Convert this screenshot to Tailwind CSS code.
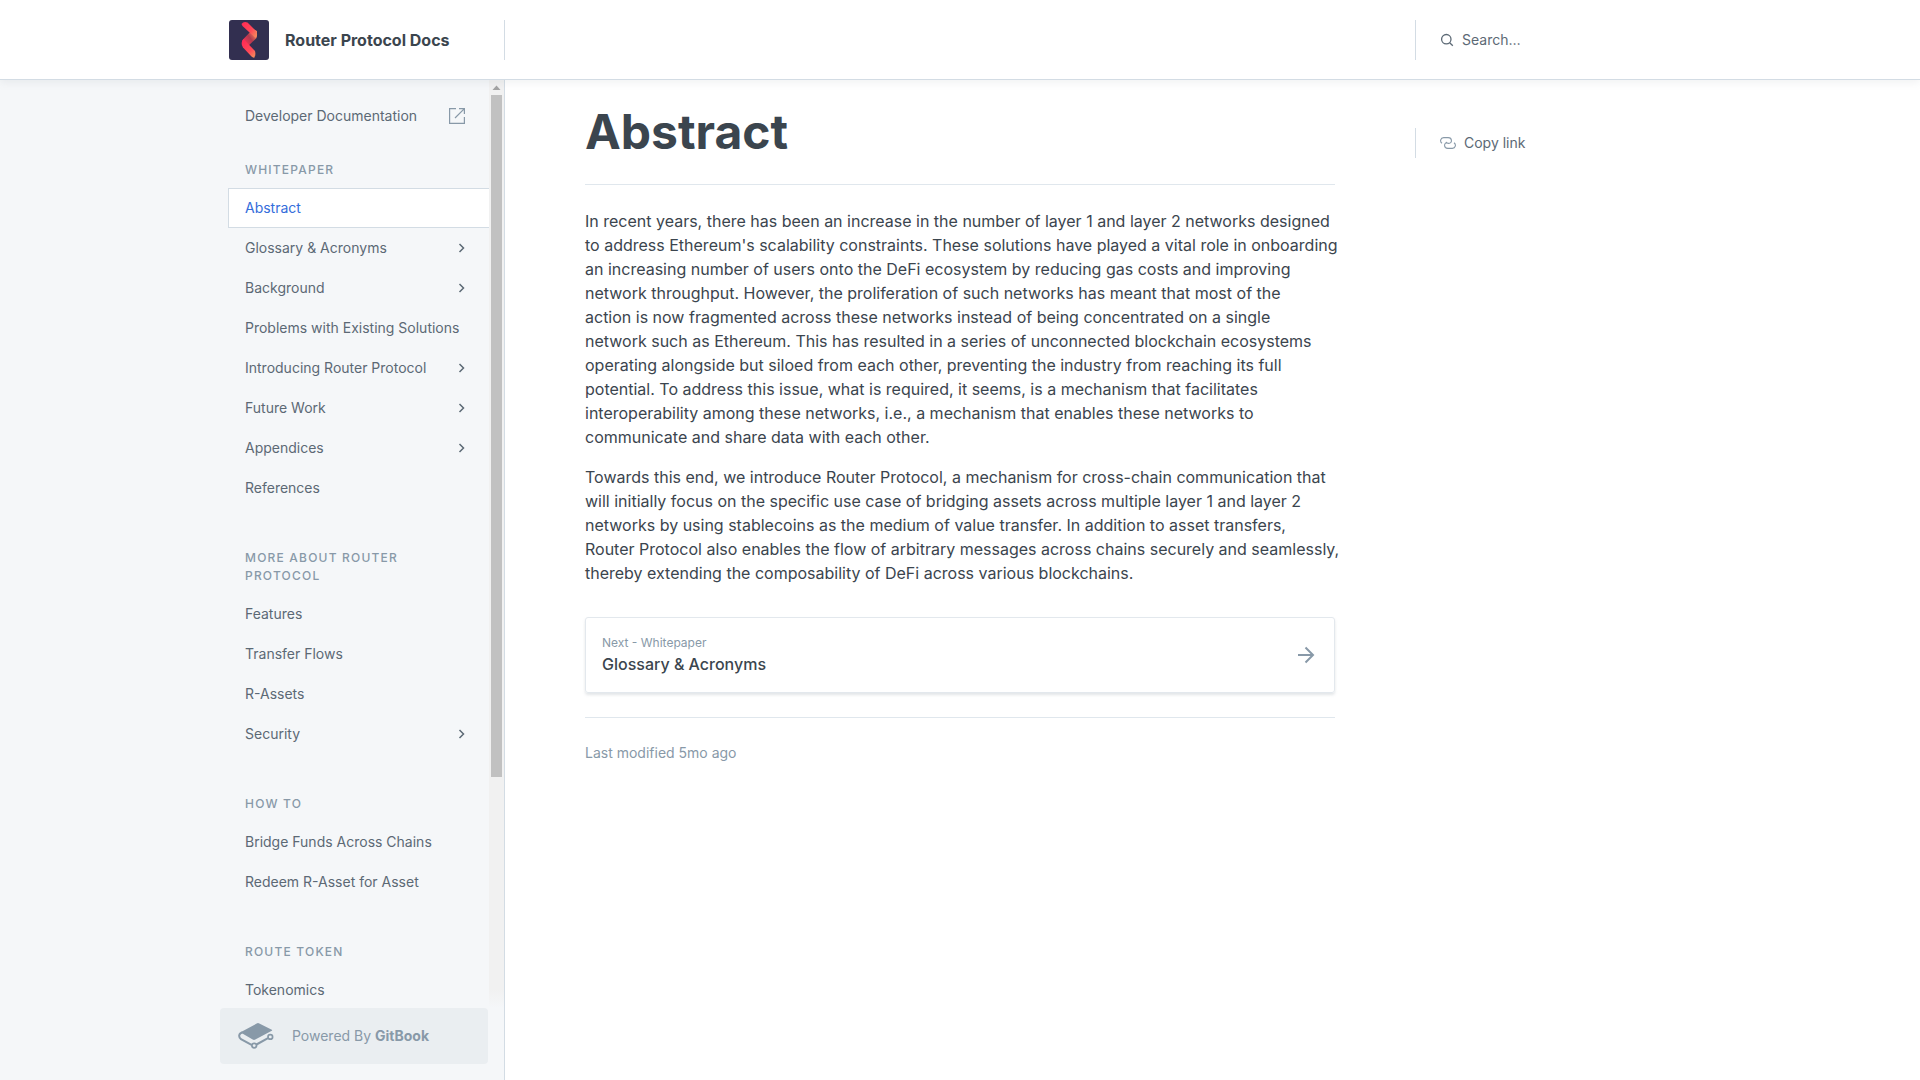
<!DOCTYPE html>
<html lang="en">
<head>
<meta charset="utf-8">
<meta name="viewport" content="width=device-width, initial-scale=1">
<title>Abstract - Router Protocol Docs</title>
<script src="https://cdn.jsdelivr.net/npm/@tailwindcss/browser@4"></script>
</head>
<body class="flex h-screen flex-col overflow-hidden bg-white font-['Inter',sans-serif] text-[#3b454e]">
<svg class="hidden">
  <symbol id="chevron" viewBox="0 0 16 16"><path d="M5.5 4 9.500 8l-4 4" fill="none" stroke="currentColor" stroke-width="1.500"/></symbol>
</svg>

<header class="relative z-10 h-20 shrink-0 border-b border-[#d3dce4] bg-white shadow-[0_3px_8px_0_rgba(116,129,141,0.1)]">
  <div class="mx-auto flex h-full max-w-[1464px] items-center">
    <div class="flex h-10 w-[277px] shrink-0 items-center border-r border-[#d3dce4]">
      <a href="#" class="flex items-center gap-4 pl-px font-bold">
        <svg class="size-10" viewBox="0 0 40 40" aria-hidden="true">
          <defs>
            <linearGradient id="arm-top" gradientUnits="userSpaceOnUse" x1="13" y1="4" x2="28" y2="15"><stop offset="0" stop-color="#ff2d55"/><stop offset=".6" stop-color="#ff4757"/><stop offset="1" stop-color="#f58a5c"/></linearGradient>
            <linearGradient id="arm-mid" gradientUnits="userSpaceOnUse" x1="27" y1="14" x2="14" y2="23"><stop offset="0" stop-color="#f5805c"/><stop offset=".45" stop-color="#b03a4e"/><stop offset="1" stop-color="#ff3355"/></linearGradient>
            <linearGradient id="arm-low" gradientUnits="userSpaceOnUse" x1="14" y1="22" x2="26" y2="36"><stop offset="0" stop-color="#ff2d55"/><stop offset=".6" stop-color="#ff4757"/><stop offset="1" stop-color="#f58a5c"/></linearGradient>
          </defs>
          <rect width="40" height="40" rx="3" fill="#322f50"/>
          <path d="M28 11v5q0 2-2 3.500L18 27l-4-1.500q-2-3.500 0-6L24 9z" fill="url(#arm-mid)"/>
          <path d="M12.500 4q2-3 6-1.500l8 8q3 3.500 0 7.500L13.500 6z" fill="url(#arm-top)"/>
          <path d="M14.500 19 26 31q1 3.500-.5 6.500-1.500.5-3-1L14 27.500Q11 23 14.500 19z" fill="url(#arm-low)"/>
        </svg>
        <span>Router Protocol Docs</span>
      </a>
    </div>
    <div class="ml-[910px] flex h-10 items-center border-l border-[#d3dce4] pl-6">
      <button type="button" class="flex items-center gap-2 text-sm text-[#5c6975]">
        <svg class="size-[14px]" viewBox="0 0 14 14" fill="none" stroke="currentColor" stroke-width="1.300" aria-hidden="true"><circle cx="6.300" cy="6.200" r="4.700"/><path d="m9.700 9.700 3.100 3"/></svg>
        <span>Search…</span>
      </button>
    </div>
  </div>
</header>

<div class="flex min-h-0 flex-1">
  <aside class="flex w-[calc((100%_-_1464px)/2_+_277px)] min-w-[285px] shrink-0 flex-col items-end border-r border-[#d3dce4] bg-[#f5f7f9]">
    <div class="flex min-h-0 w-[276px] flex-1">
      <nav aria-label="Pages" class="min-w-0 flex-1 overflow-hidden pt-4 text-sm text-[#5c6975]">
        <a href="#" class="flex h-10 items-center justify-between pr-6 pl-[17px]">Developer Documentation
          <svg class="size-4" viewBox="0 0 16 16" fill="none" stroke="#8899a8" stroke-width="1.200" aria-hidden="true"><path d="M7 .6H.6v14.800h14.800V9M10 .6h5.400V6M15.400.6 6 10"/></svg>
        </a>
        <h2 class="mt-[25px] mb-[9px] px-[17px] text-xs leading-[18px] font-medium tracking-[1.2px] text-[#8899a8] uppercase">Whitepaper</h2>
        <a href="#" aria-current="page" class="flex h-10 items-center border border-r-0 border-[#d3dce4] bg-white pl-4 text-[#346ddb]">Abstract</a>
        <a href="#" class="flex h-10 items-center justify-between pr-[19px] pl-[17px]">Glossary &amp; Acronyms<svg class="size-4" aria-hidden="true"><use href="#chevron"/></svg></a>
        <a href="#" class="flex h-10 items-center justify-between pr-[19px] pl-[17px]">Background<svg class="size-4" aria-hidden="true"><use href="#chevron"/></svg></a>
        <a href="#" class="flex h-10 items-center pl-[17px]">Problems with Existing Solutions</a>
        <a href="#" class="flex h-10 items-center justify-between pr-[19px] pl-[17px]">Introducing Router Protocol<svg class="size-4" aria-hidden="true"><use href="#chevron"/></svg></a>
        <a href="#" class="flex h-10 items-center justify-between pr-[19px] pl-[17px]">Future Work<svg class="size-4" aria-hidden="true"><use href="#chevron"/></svg></a>
        <a href="#" class="flex h-10 items-center justify-between pr-[19px] pl-[17px]">Appendices<svg class="size-4" aria-hidden="true"><use href="#chevron"/></svg></a>
        <a href="#" class="flex h-10 items-center pl-[17px]">References</a>
        <h2 class="mt-[41px] mb-[9px] px-[17px] text-xs leading-[18px] font-medium tracking-[1.2px] text-[#8899a8] uppercase">More about Router Protocol</h2>
        <a href="#" class="flex h-10 items-center pl-[17px]">Features</a>
        <a href="#" class="flex h-10 items-center pl-[17px]">Transfer Flows</a>
        <a href="#" class="flex h-10 items-center pl-[17px]">R-Assets</a>
        <a href="#" class="flex h-10 items-center justify-between pr-[19px] pl-[17px]">Security<svg class="size-4" aria-hidden="true"><use href="#chevron"/></svg></a>
        <h2 class="mt-[41px] mb-[9px] px-[17px] text-xs leading-[18px] font-medium tracking-[1.2px] text-[#8899a8] uppercase">How to</h2>
        <a href="#" class="flex h-10 items-center pl-[17px]">Bridge Funds Across Chains</a>
        <a href="#" class="flex h-10 items-center pl-[17px]">Redeem R-Asset for Asset</a>
        <h2 class="mt-[41px] mb-[9px] px-[17px] text-xs leading-[18px] font-medium tracking-[1.2px] text-[#8899a8] uppercase">Route Token</h2>
        <a href="#" class="flex h-10 items-center pl-[17px]">Tokenomics</a>
      </nav>
      <div class="flex w-[15px] shrink-0 flex-col items-center bg-linear-to-b from-[#f1f1f1] from-98% to-[#f5f7f9]" aria-hidden="true">
        <svg class="h-[15px] w-[15px] shrink-0" viewBox="0 0 15 15"><path d="M7.500 5.500 11.500 10h-8z" fill="#a3a3a3"/></svg>
        <div class="h-[73.5%] w-[11px] bg-[#c1c1c1]"></div>
      </div>
    </div>
    <a href="#" class="mr-4 mb-4 flex h-14 w-[268px] items-center rounded bg-[#eaeef1] pl-[18px] text-sm text-[#8899a8]">
      <svg class="h-7 w-[36px]" viewBox="0 0 36 28" fill="none" stroke="#8899a8" aria-hidden="true">
        <path d="M3.500 9.800 18.700 1.500q1.300-.8 2.600 0l12.500 6.200q.8.500 0 1L17.300 17.600q-1.300.7-2.600 0L3.500 11z" fill="#8899a8" stroke="none"/>
        <path d="M4.500 10.300C.5 11.500.3 15 3 17.200l11 6M18.500 22.500l11.500-6.300" stroke-width="2"/>
        <circle cx="16.200" cy="23.600" r="2.300" stroke-width="1.700"/>
        <circle cx="32.300" cy="14.900" r="2.300" stroke-width="1.700"/>
      </svg>
      <span class="ml-[18px]">Powered By <b class="font-bold">GitBook</b></span>
    </a>
  </aside>

  <div class="flex min-w-0 flex-1 gap-20 pl-20">
    <main class="w-full max-w-[750px]">
      <h1 class="mt-5 text-5xl leading-[64px] font-bold">Abstract</h1>
      <hr class="mt-5 mb-6 border-[#e0e7ed]">
      <div class="-mr-6 flex flex-col gap-4 leading-6">
        <p>In recent years, there has been an increase in the number of layer 1 and layer 2 networks designed<br>
        to address Ethereum's scalability constraints. These solutions have played a vital role in onboarding<br>
        an increasing number of users onto the DeFi ecosystem by reducing gas costs and improving<br>
        network throughput. However, the proliferation of such networks has meant that most of the<br>
        action is now fragmented across these networks instead of being concentrated on a single<br>
        network such as Ethereum. This has resulted in a series of unconnected blockchain ecosystems<br>
        operating alongside but siloed from each other, preventing the industry from reaching its full<br>
        potential. To address this issue, what is required, it seems, is a mechanism that facilitates<br>
        interoperability among these networks, i.e., a mechanism that enables these networks to<br>
        communicate and share data with each other.</p>
        <p>Towards this end, we introduce Router Protocol, a mechanism for cross-chain communication that<br>
        will initially focus on the specific use case of bridging assets across multiple layer 1 and layer 2<br>
        networks by using stablecoins as the medium of value transfer. In addition to asset transfers,<br>
        Router Protocol also enables the flow of arbitrary messages across chains securely and seamlessly,<br>
        thereby extending the composability of DeFi across various blockchains.</p>
      </div>
      <a href="#" class="mt-8 flex h-[76px] items-center justify-between rounded-[3px] border border-[#e3e8ed] px-4 shadow-[0_2px_3px_0_rgba(116,129,141,0.2)]">
        <span class="flex flex-col">
          <span class="text-xs leading-[18px] text-[#8899a8]">Next - Whitepaper</span>
          <span class="leading-6 font-medium">Glossary &amp; Acronyms</span>
        </span>
        <svg class="size-6" viewBox="0 0 24 24" fill="none" stroke="#8899a8" stroke-width="2" aria-hidden="true"><path d="M4 12h15M11.500 4.500 19 12l-7.500 7.500"/></svg>
      </a>
      <hr class="mt-6 mb-[23px] border-[#e0e7ed]">
      <p class="text-sm leading-6 text-[#8899a8]">Last modified 5mo ago</p>
    </main>
    <aside class="mt-12 flex h-[30px] items-center border-l border-[#d3dce4] pl-6">
      <button type="button" class="flex items-center gap-2 text-sm whitespace-nowrap text-[#5c6975]">
        <svg class="size-4" viewBox="0 0 16 16" fill="none" stroke="#8899a8" stroke-width="1.100" aria-hidden="true"><path d="M2 8.300C-.4 6.500.4 2.600 3.700 2.600h4.500c4.200 0 4.200 5.800.6 5.800-1.300 0-2.300-.6-2.600-1.600"/><path d="M14 7.700c2.400 1.800 1.600 5.700-1.700 5.700H7.800c-4.200 0-4.200-5.800-.6-5.800"/></svg>
        <span>Copy link</span>
      </button>
    </aside>
  </div>
</div>
</body>
</html>
